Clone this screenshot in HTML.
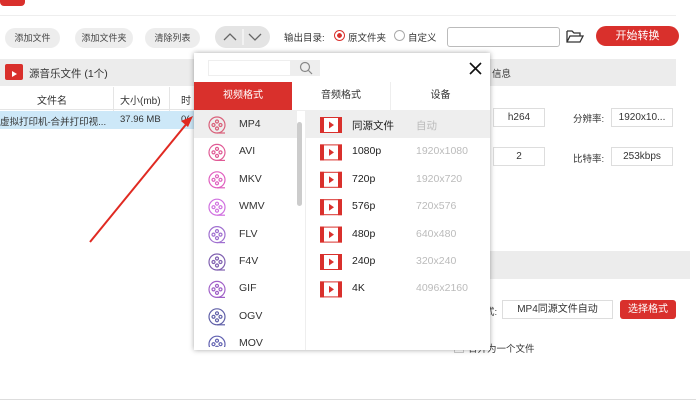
<!DOCTYPE html><html><head><meta charset="utf-8"><style>
*{margin:0;padding:0;box-sizing:border-box}
body{width:696px;height:405px;background:#fff;font-family:"Liberation Sans","Noto Sans CJK SC",sans-serif;font-size:10px;color:#333;position:relative;overflow:hidden}
.a{position:absolute}
.btn{position:absolute;top:28px;height:20px;background:#ededed;border-radius:10px;font-size:9px;line-height:20px;text-align:center;color:#444}
.box{position:absolute;border:1px solid #ddd;background:#fff;text-align:center;font-size:10px;line-height:17px}
.it{position:absolute;left:194px;width:104px;height:27px;font-size:10.5px}
.it span{position:absolute;left:45px;top:7px}
.ro{position:absolute;left:310px;width:178px;height:27px;font-size:10.5px}
.ro b{font-weight:normal;position:absolute;left:42px;top:7px;color:#222}
.ro i{font-style:normal;position:absolute;left:106px;top:7px;color:#bbb}
</style></head><body>
<div class="a" style="left:0;top:0;width:25px;height:6px;background:#d9302c;border-radius:0 0 4px 4px"></div>
<div class="a" style="left:0;top:15px;width:676px;height:1px;background:#eee"></div>
<div class="btn" style="left:5px;width:55px">添加文件</div>
<div class="btn" style="left:75px;width:58px">添加文件夹</div>
<div class="btn" style="left:145px;width:55px">清除列表</div>
<div class="a" style="left:215px;top:26px;width:55px;height:22px;background:#e4e4e4;border-radius:11px"></div>
<svg class="a" style="left:215px;top:26px" width="55" height="22"><path d="M9 14l6-6 6 6M34 8l6 6 6-6" fill="none" stroke="#666" stroke-width="1.3"/><line x1="28" y1="3" x2="28" y2="19" stroke="#fff"/></svg>
<div class="a" style="left:284px;top:30px;font-size:9.5px">输出目录:</div>
<div class="a" style="left:334px;top:30px;width:11px;height:11px;border:1px solid #d9302c;border-radius:50%;background:radial-gradient(#d9302c 35%,#fff 40%)"></div>
<div class="a" style="left:348px;top:30px;font-size:9.5px">原文件夹</div>
<div class="a" style="left:394px;top:30px;width:11px;height:11px;border:1px solid #aaa;border-radius:50%"></div>
<div class="a" style="left:408px;top:30px;font-size:9.5px">自定义</div>
<div class="a" style="left:447px;top:27px;width:113px;height:20px;border:1px solid #bbb;border-radius:3px"></div>
<svg class="a" style="left:566px;top:29px" width="18" height="15" viewBox="0 0 18 15"><path d="M1 2h5l2 2h6v3M1 2v11h13l3-6H4L1 13" fill="none" stroke="#333" stroke-width="1.3"/></svg>
<div class="a" style="left:596px;top:26px;width:83px;height:20px;background:#d9302c;border-radius:10px;color:#fff;font-size:11px;line-height:20px;text-align:center">开始转换</div>
<div class="a" style="left:0;top:59px;width:340px;height:27px;background:#ececec"></div>
<div class="a" style="left:5px;top:64px;width:18px;height:16px;background:#d9302c;border-radius:2px"></div>
<div class="a" style="left:12px;top:71px;width:0;height:0;border-left:5px solid #fff;border-top:3px solid transparent;border-bottom:3px solid transparent"></div>
<div class="a" style="left:29px;top:66px;font-size:10.5px">源音乐文件 (1个)</div>
<div class="a" style="left:440px;top:59px;width:236px;height:27px;background:#ececec"></div>
<div class="a" style="left:492px;top:66px;font-size:9.5px">信息</div>
<div class="a" style="left:0;top:87px;width:340px;height:23px;border-bottom:1px solid #e5e5e5"></div>
<div class="a" style="left:113px;top:87px;width:1px;height:42px;background:#e5e5e5"></div>
<div class="a" style="left:169px;top:87px;width:1px;height:42px;background:#e5e5e5"></div>
<div class="a" style="left:37px;top:92px;font-size:10px">文件名</div>
<div class="a" style="left:120px;top:92px;font-size:10px">大小(mb)</div>
<div class="a" style="left:181px;top:92px;font-size:10px">时</div>
<div class="a" style="left:0;top:111px;width:340px;height:18px;background:#cde8f8"></div>
<div class="a" style="left:0;top:114px;font-size:9.5px">虚拟打印机-合并打印视...</div>
<div class="a" style="left:120px;top:114px;font-size:9.5px">37.96 MB</div>
<div class="a" style="left:181px;top:114px;font-size:9.5px">0(</div>
<div class="box" style="left:493px;top:108px;width:52px">h264</div>
<div class="a" style="left:573px;top:111px;font-size:9.5px">分辨率:</div>
<div class="box" style="left:611px;top:108px;width:62px">1920x10...</div>
<div class="box" style="left:493px;top:147px;width:52px">2</div>
<div class="a" style="left:573px;top:151px;font-size:9.5px">比特率:</div>
<div class="box" style="left:611px;top:147px;width:62px">253kbps</div>
<div class="a" style="left:440px;top:251px;width:250px;height:28px;background:#ececec"></div>
<div class="a" style="left:485px;top:304px;font-size:9.5px">式:</div>
<div class="box" style="left:502px;top:300px;width:111px">MP4同源文件自动</div>
<div class="a" style="left:620px;top:300px;width:56px;height:19px;background:#d9302c;border-radius:3px;color:#fff;font-size:10px;line-height:19px;text-align:center">选择格式</div>
<div class="a" style="left:454px;top:343px;width:10px;height:10px;border:1px solid #ccc"></div>
<div class="a" style="left:468px;top:341px;font-size:9.5px">合并为一个文件</div>
<div class="a" style="left:0;top:399px;width:696px;height:1px;background:#ddd"></div>
<svg class="a" style="left:0;top:0" width="696" height="405"><line x1="90" y1="242" x2="188" y2="122" stroke="#e02a22" stroke-width="2"/><path d="M193 116l-12 5 7 6z" fill="#e02a22"/></svg>
<div class="a" style="left:194px;top:53px;width:296px;height:297px;background:#fff;box-shadow:0 0 5px rgba(0,0,0,.35)">
</div>
<div class="a" style="left:208px;top:60px;width:83px;height:16px;border:1px solid #eee"></div>
<div class="a" style="left:291px;top:60px;width:29px;height:16px;background:#eee"></div>
<svg class="a" style="left:299px;top:61px" width="14" height="14"><circle cx="6" cy="6" r="4.5" fill="none" stroke="#888" stroke-width="1.2"/><line x1="9.5" y1="9.5" x2="13" y2="13" stroke="#888" stroke-width="1.2"/></svg>
<svg class="a" style="left:469px;top:62px" width="13" height="13"><path d="M1 1L12 12M12 1L1 12" stroke="#111" stroke-width="1.6"/></svg>
<div class="a" style="left:194px;top:82px;width:98px;height:28px;background:#d9302c;color:#fff;font-size:10px;line-height:28px;text-align:center">视频格式</div>
<div class="a" style="left:292px;top:82px;width:99px;height:28px;border-right:1px solid #eee;font-size:10px;line-height:28px;text-align:center">音频格式</div>
<div class="a" style="left:391px;top:82px;width:99px;height:28px;font-size:10px;line-height:28px;text-align:center">设备</div>
<div class="a" style="left:194px;top:110px;width:296px;height:1px;background:#eee"></div>
<div class="a" style="left:305px;top:111px;width:1px;height:239px;background:#eee"></div>
<div class="a" style="left:297px;top:122px;width:5px;height:84px;background:#ccc;border-radius:3px"></div>
<div class="a" style="left:194px;top:111px;width:103px;height:27px;background:#eee"></div>
<div class="a" style="left:306px;top:111px;width:184px;height:27px;background:#eee"></div>
<svg class="a" style="left:205px;top:112px" width="26" height="235">
<defs><g id="r" fill="none" stroke-width="1.2"><circle cx="12" cy="13" r="8"/><circle cx="12" cy="9.5" r="1.5"/><circle cx="12" cy="16.5" r="1.5"/><circle cx="8.5" cy="13" r="1.5"/><circle cx="15.5" cy="13" r="1.5"/><path d="M12 21h8"/></g></defs>
<use href="#r" stroke="#d9607a"/>
<use href="#r" stroke="#e05a95" y="27.4"/>
<use href="#r" stroke="#e060c0" y="54.8"/>
<use href="#r" stroke="#d070e0" y="82.2"/>
<use href="#r" stroke="#a070d0" y="109.6"/>
<use href="#r" stroke="#8060b0" y="137"/>
<use href="#r" stroke="#a060c8" y="164.4"/>
<use href="#r" stroke="#6060a8" y="191.8"/>
<use href="#r" stroke="#6060b0" y="219.2"/>
</svg>
<div class="it" style="top:111px"><span>MP4</span></div>
<div class="it" style="top:138.4px"><span>AVI</span></div>
<div class="it" style="top:165.8px"><span>MKV</span></div>
<div class="it" style="top:193.2px"><span>WMV</span></div>
<div class="it" style="top:220.6px"><span>FLV</span></div>
<div class="it" style="top:248px"><span>F4V</span></div>
<div class="it" style="top:275.4px"><span>GIF</span></div>
<div class="it" style="top:302.8px"><span>OGV</span></div>
<div class="it" style="top:330.2px;height:19px;overflow:hidden"><span>MOV</span></div>
<svg class="a" style="left:320px;top:117px" width="22" height="185">
<g id="v"><rect x="0.5" y="0.5" width="21" height="15" fill="#fff" stroke="#d9302c"/><rect x="0" y="0" width="4" height="16" fill="#d9302c"/><rect x="18" y="0" width="4" height="16" fill="#d9302c"/><path d="M9 4.5l5 3.5-5 3.5z" fill="#d9302c"/></g>
<use href="#v" y="27.4"/><use href="#v" y="54.8"/><use href="#v" y="82.2"/><use href="#v" y="109.6"/><use href="#v" y="137"/><use href="#v" y="164.4"/>
</svg>
<div class="ro" style="top:111px"><b>同源文件</b><i>自动</i></div>
<div class="ro" style="top:138.4px"><b>1080p</b><i>1920x1080</i></div>
<div class="ro" style="top:165.8px"><b>720p</b><i>1920x720</i></div>
<div class="ro" style="top:193.2px"><b>576p</b><i>720x576</i></div>
<div class="ro" style="top:220.6px"><b>480p</b><i>640x480</i></div>
<div class="ro" style="top:248px"><b>240p</b><i>320x240</i></div>
<div class="ro" style="top:275.4px"><b>4K</b><i>4096x2160</i></div>
</body></html>
